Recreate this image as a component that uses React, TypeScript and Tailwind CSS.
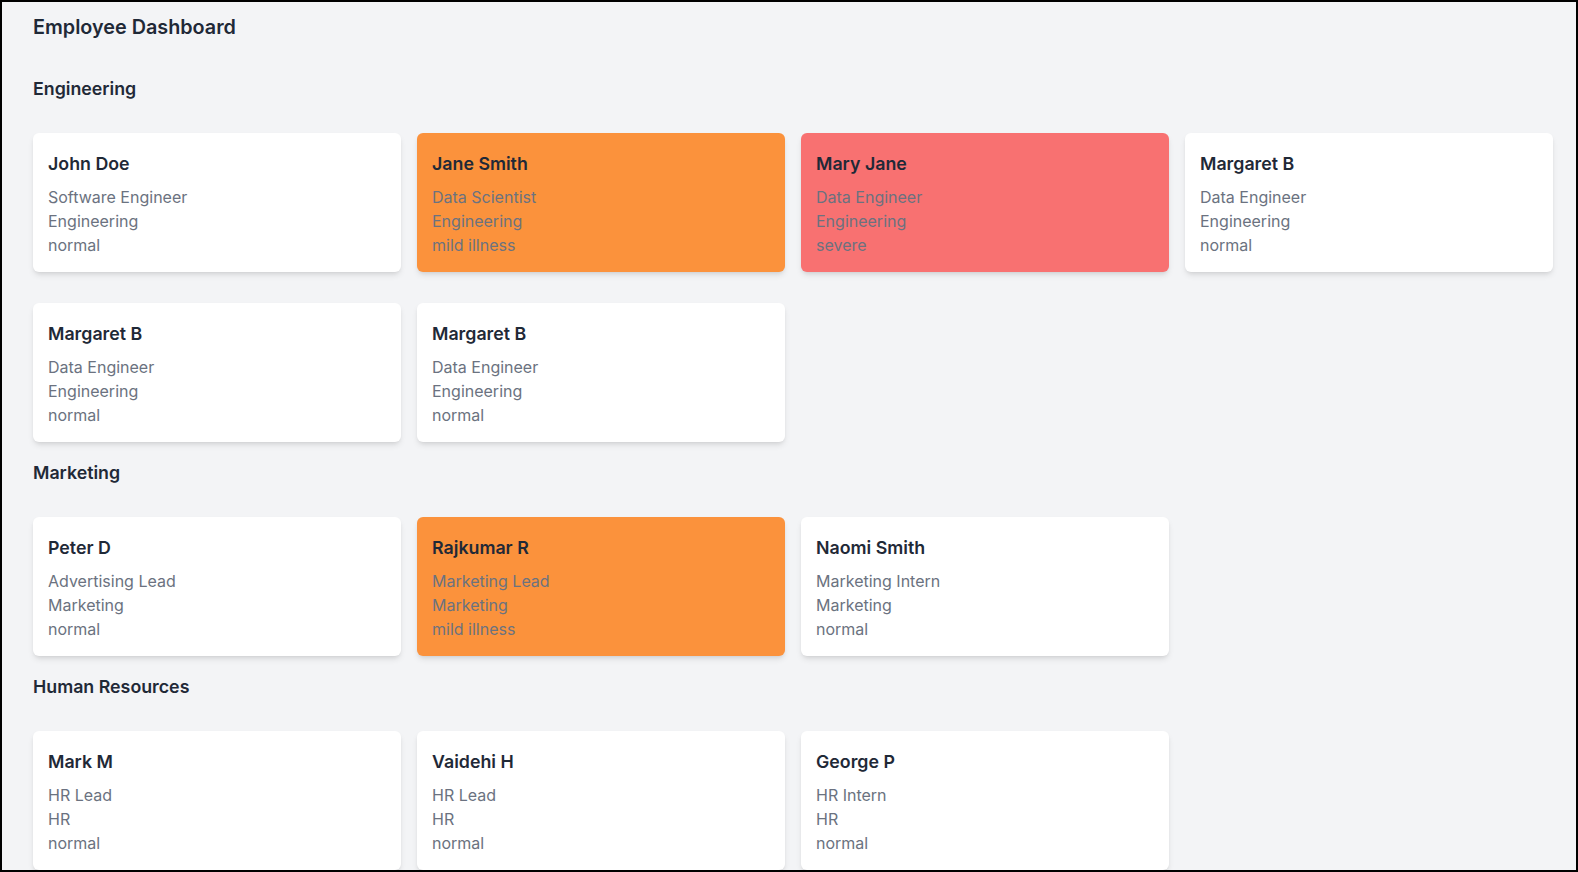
type Employee = {
  name: string;
  role: string;
  dept: string;
  status: 'normal' | 'mild illness' | 'severe';
};

const sections: { title: string; people: Employee[] }[] = [
  {
    title: 'Engineering',
    people: [
      { name: 'John Doe', role: 'Software Engineer', dept: 'Engineering', status: 'normal' },
      { name: 'Jane Smith', role: 'Data Scientist', dept: 'Engineering', status: 'mild illness' },
      { name: 'Mary Jane', role: 'Data Engineer', dept: 'Engineering', status: 'severe' },
      { name: 'Margaret B', role: 'Data Engineer', dept: 'Engineering', status: 'normal' },
      { name: 'Margaret B', role: 'Data Engineer', dept: 'Engineering', status: 'normal' },
      { name: 'Margaret B', role: 'Data Engineer', dept: 'Engineering', status: 'normal' },
    ],
  },
  {
    title: 'Marketing',
    people: [
      { name: 'Peter D', role: 'Advertising Lead', dept: 'Marketing', status: 'normal' },
      { name: 'Rajkumar R', role: 'Marketing Lead', dept: 'Marketing', status: 'mild illness' },
      { name: 'Naomi Smith', role: 'Marketing Intern', dept: 'Marketing', status: 'normal' },
    ],
  },
  {
    title: 'Human Resources',
    people: [
      { name: 'Mark M', role: 'HR Lead', dept: 'HR', status: 'normal' },
      { name: 'Vaidehi H', role: 'HR Lead', dept: 'HR', status: 'normal' },
      { name: 'George P', role: 'HR Intern', dept: 'HR', status: 'normal' },
    ],
  },
];

const statusBg = {
  normal: 'bg-white',
  'mild illness': 'bg-[#fb923c]',
  severe: 'bg-[#f87171]',
};

function EmployeeCard({ person }: { person: Employee }) {
  return (
    <div className={`rounded-md shadow-md px-[15px] pt-[17px] pb-[15px] ${statusBg[person.status]}`}>
      <h3 className="text-[17.8px] leading-[28px] font-semibold text-[#1f2937] mb-[7px]">{person.name}</h3>
      <div className="text-[16px] leading-[24px] text-[#6b7280]">
        <p>{person.role}</p>
        <p>{person.dept}</p>
        <p>{person.status}</p>
      </div>
    </div>
  );
}

export default function App() {
  return (
    <div
      className="h-screen overflow-hidden border-2 border-black bg-[#f3f4f6] pl-[31px] pt-[12px]"
      style={{ fontFamily: 'Inter, "Noto Sans", sans-serif' }}
    >
      <h1 className="text-[19.8px] leading-[27px] font-semibold text-[#1f2937] mb-[34px]">Employee Dashboard</h1>

      {sections.map((section) => (
        <section key={section.title} className="mb-[17px]">
          <h2 className="text-[17.8px] leading-[27px] font-semibold text-[#1f2937] mb-[31px]">{section.title}</h2>
          <div className="grid grid-cols-4 gap-x-4 gap-y-[31px] w-[1520px]">
            {section.people.map((p, i) => (
              <EmployeeCard key={i} person={p} />
            ))}
          </div>
        </section>
      ))}
    </div>
  );
}
